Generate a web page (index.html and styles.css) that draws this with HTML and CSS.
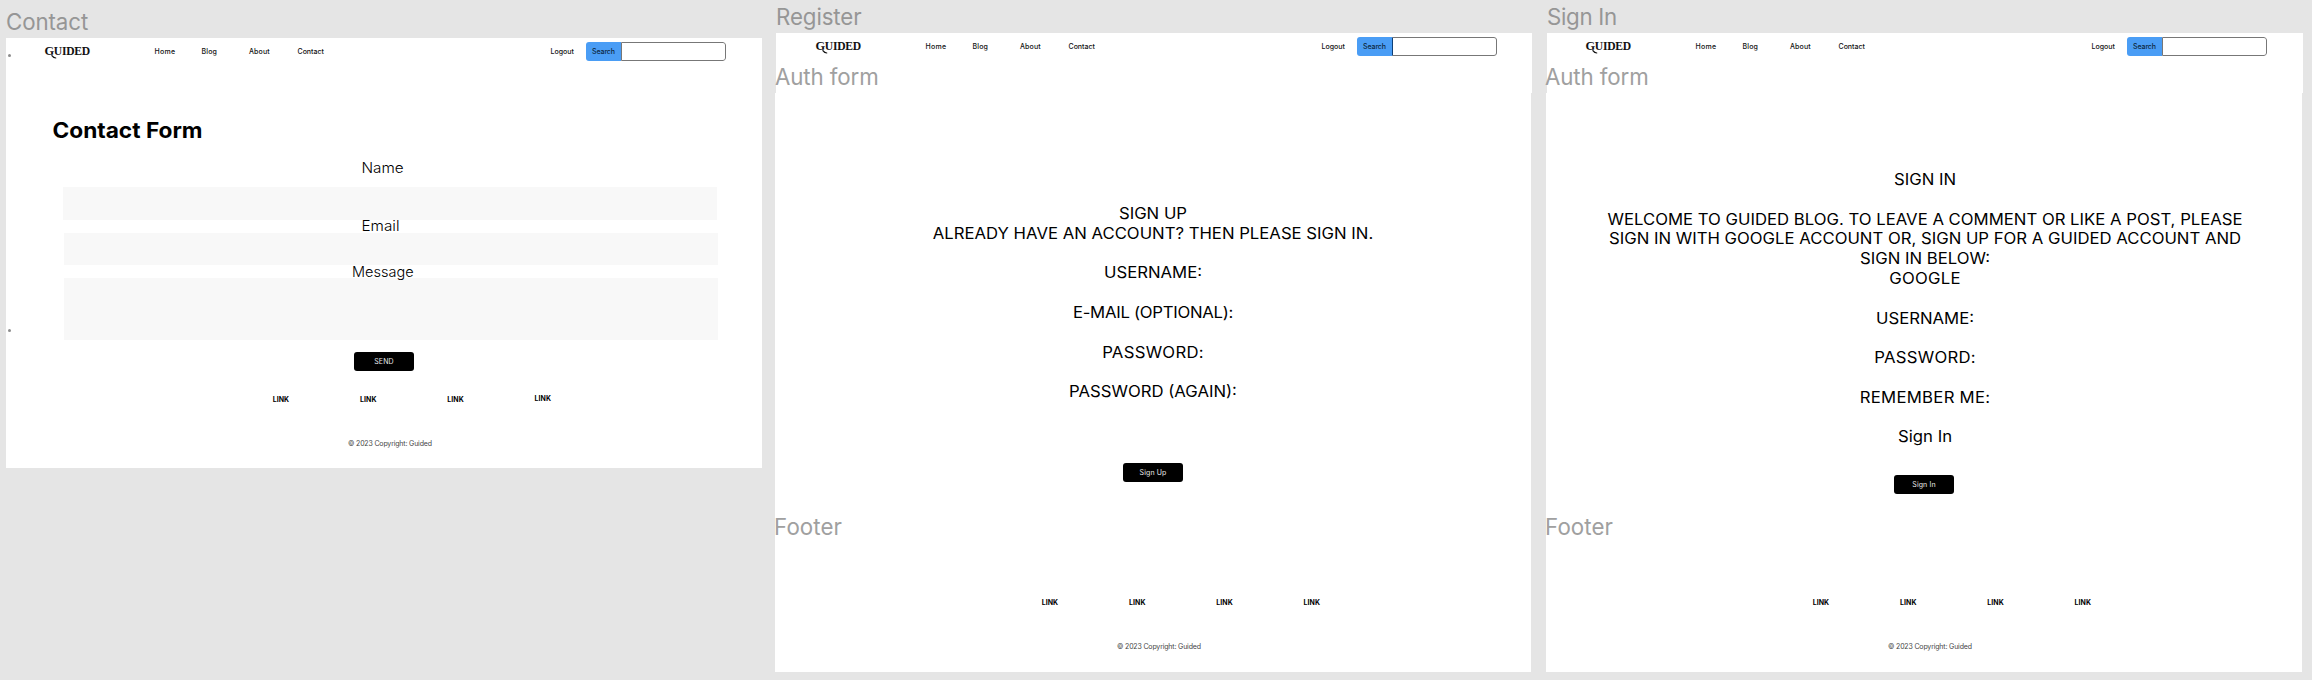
FILE: index.html
```
<!DOCTYPE html>
<html lang="en">
<head>
<meta charset="utf-8">
<title>Guided – Contact, Register, Sign In</title>
<link rel="stylesheet" href="styles.css">
</head>
<body>
<main class="canvas">

  <section class="frame frame-contact">
    <h2 class="label label-frame">Contact</h2>
    <i class="dot dot-top"></i>
    <i class="dot dot-side"></i>
    <header class="topbar">
      <div class="logo"><span class="logo-g">G</span>UIDED<svg class="logo-tail" viewBox="0 0 6 4"><path d="M0.6 0.2C1.6 1.4 2 3.2 5.2 3" fill="none" stroke="#111" stroke-width="1.2"/></svg></div>
      <a class="home">Home</a><a class="blog">Blog</a><a class="about">About</a><a>Contact</a><a>Logout</a>
      <div class="search"><span class="search-btn">Search</span><span class="search-input"></span></div>
    </header>
    <form class="contact-form">
      <h1 class="heading">Contact Form</h1>
      <div class="field-label name">Name</div>
      <div class="field field-name"></div>
      <div class="field-label email">Email</div>
      <div class="field field-email"></div>
      <div class="field-label message">Message</div>
      <div class="field field-message"></div>
      <div class="btn btn-send">SEND</div>
    </form>
    <footer class="footer">
      <nav class="links"><a>LINK</a><a>LINK</a><a>LINK</a><a class="raised">LINK</a></nav>
      <p class="copyright">© 2023 Copyright: Guided</p>
    </footer>
  </section>

  <section class="frame frame-register">
    <h2 class="label label-frame">Register</h2>
    <header class="topbar">
      <div class="logo"><span class="logo-g">G</span>UIDED<svg class="logo-tail" viewBox="0 0 6 4"><path d="M0.6 0.2C1.6 1.4 2 3.2 5.2 3" fill="none" stroke="#111" stroke-width="1.2"/></svg></div>
      <a class="home">Home</a><a class="blog">Blog</a><a class="about">About</a><a>Contact</a><a>Logout</a>
      <div class="search search-dark"><span class="search-btn">Search</span><span class="search-input"></span></div>
    </header>
    <div class="auth">
      <h3 class="label label-auth">Auth form</h3>
      <div class="copy">
        <p>SIGN UP</p>
        <p>ALREADY HAVE AN ACCOUNT? THEN PLEASE SIGN IN.</p>
        <p class="gap">USERNAME:</p>
        <p class="gap tight">E-MAIL (OPTIONAL):</p>
        <p class="gap wide">PASSWORD:</p>
        <p class="gap">PASSWORD (AGAIN):</p>
      </div>
      <div class="btn btn-signup">Sign Up</div>
      <h3 class="label label-footer">Footer</h3>
      <footer class="footer">
        <nav class="links"><a>LINK</a><a>LINK</a><a>LINK</a><a class="raised">LINK</a></nav>
        <p class="copyright">© 2023 Copyright: Guided</p>
      </footer>
    </div>
  </section>

  <section class="frame frame-signin">
    <h2 class="label label-frame">Sign In</h2>
    <header class="topbar">
      <div class="logo"><span class="logo-g">G</span>UIDED<svg class="logo-tail" viewBox="0 0 6 4"><path d="M0.6 0.2C1.6 1.4 2 3.2 5.2 3" fill="none" stroke="#111" stroke-width="1.2"/></svg></div>
      <a class="home">Home</a><a class="blog">Blog</a><a class="about">About</a><a>Contact</a><a>Logout</a>
      <div class="search"><span class="search-btn">Search</span><span class="search-input"></span></div>
    </header>
    <div class="auth">
      <h3 class="label label-auth">Auth form</h3>
      <div class="copy">
        <p>SIGN IN</p>
        <p class="gap">WELCOME TO GUIDED BLOG. TO LEAVE A COMMENT OR LIKE A POST, PLEASE</p>
        <p>SIGN IN WITH GOOGLE ACCOUNT OR, SIGN UP FOR A GUIDED ACCOUNT AND</p>
        <p>SIGN IN BELOW:</p>
        <p class="wide">GOOGLE</p>
        <p class="gap">USERNAME:</p>
        <p class="gap wide">PASSWORD:</p>
        <p class="gap wide">REMEMBER ME:</p>
        <p class="gap">Sign In</p>
      </div>
      <div class="btn btn-signin">Sign In</div>
      <h3 class="label label-footer">Footer</h3>
      <footer class="footer">
        <nav class="links"><a>LINK</a><a>LINK</a><a>LINK</a><a class="raised">LINK</a></nav>
        <p class="copyright">© 2023 Copyright: Guided</p>
      </footer>
    </div>
  </section>

</main>
</body>
</html>
```
FILE: styles.css
```
* { box-sizing: border-box; margin: 0; padding: 0; }
body { font-family: Inter, "Liberation Sans", sans-serif; color: #000; background: #e5e5e5; }
.canvas { position: relative; width: 2312px; height: 680px; background: #e5e5e5; overflow: hidden; }

/* Artboards on the free canvas */
.frame { position: absolute; width: 756px; display: flex; flex-direction: column; }
.frame-contact { left: 6px; top: 38px; height: 430.3px; background: #fff; }
.frame-register { left: 776px; top: 33px; height: 638.7px; }
.frame-signin { left: 1547px; top: 33px; height: 638.7px; }

/* Artboard names */
.label { position: absolute; font-size: 22.3px; line-height: 26px; font-weight: 400; color: #969696; white-space: nowrap; letter-spacing: -0.1px; }
.label-frame { left: 0; top: -29px; }
.frame-signin .label-frame { letter-spacing: -0.3px; }
.label-auth { left: 0; top: -29px; color: #a0a0a0; }
.frame-signin .label-auth { left: -1px; }
.label-footer { left: -1px; top: 421px; color: #a0a0a0; letter-spacing: 0.1px; }

.dot { position: absolute; width: 3px; height: 3px; border-radius: 50%; background: #8c8c8c; }
.dot-top { left: 1.5px; top: 16px; }
.dot-side { left: 1.5px; top: 291px; }

/* Top bar */
.topbar { display: grid; grid-template-columns: 110px 47px 47.5px 48.5px 253px 35.5px 139.5px; align-items: center; height: 27px; padding-left: 38.5px; font-size: 7px; line-height: 9px; font-weight: 450; color: #111; flex: none; }
.frame-register .topbar, .frame-signin .topbar { height: 60px; padding-bottom: 33px; background: #fff; }
.frame-register .topbar { padding-left: 39.5px; }
.home { letter-spacing: 0.3px; }
.blog, .about { letter-spacing: 0.15px; }
.logo { position: relative; font: bold 11.6px/14px "Liberation Serif", serif; letter-spacing: -0.3px; white-space: nowrap; }
.logo-g { font-size: 12.4px; }
.logo-tail { position: absolute; left: 6px; top: 11px; width: 6px; height: 4px; }
.search { display: flex; height: 19px; border-radius: 3px; overflow: hidden; }
.search-btn { width: 35px; padding-left: 6px; line-height: 19px; background: #4a9df5; letter-spacing: -0.1px; color: #0c2740; }
.search-input { flex: 1; border: 1px solid #777; border-radius: 0 3px 3px 0; background: #fff; }
.search-dark .search-input { border-left-color: #0f3f75; }

/* Contact form */
.contact-form { width: 756px; padding-top: 52.5px; }
.heading { padding-left: 46.5px; font-size: 21.4px; line-height: 24px; font-weight: 700; transform: scaleX(1.06); transform-origin: 46.5px 50%; }
.field-label { position: relative; padding-left: 355.5px; font-size: 14.5px; line-height: 16px; font-weight: 350; transform: scaleX(1.055); transform-origin: 355.5px 50%; }
.name { margin-top: 18px; }
.field { width: 654px; height: 32px; margin-left: 58px; background: #f8f8f8; }
.field-name { height: 32.5px; margin: 11.5px 0 0 57px; }
.email { margin-top: -1.5px; }
.field-email { margin-top: -1px; }
.message { margin-top: -1.5px; padding-left: 346px; transform: none; }
.field-message { height: 62px; margin-top: -1.5px; }
.btn { display: flex; align-items: center; justify-content: center; width: 60px; height: 18.6px; border-radius: 3px; background: #000; color: #e8e8e8; font-size: 7px; letter-spacing: 0.1px; }
.btn-send { margin: 12px 0 0 348px; }

/* Auth body */
.auth { position: relative; display: flex; flex-direction: column; width: 756px; height: 578.7px; margin-left: -1px; background: #fff; }
.copy { text-align: center; font-size: 15.7px; line-height: 19.8px; font-weight: 430; letter-spacing: 0; white-space: nowrap; transform: scaleX(1.065); }
.frame-register .copy { padding-top: 111.1px; }
.frame-signin .copy { padding: 77.1px 0 0 2px; }
.gap { margin-top: 19.8px; }
.tight { letter-spacing: -0.25px; }
.wide { letter-spacing: 0.25px; }
.btn-signup { margin: 61.3px 0 0 348px; }
.btn-signin { margin: 28.2px 0 0 348px; }

/* Footer */
.footer { margin-top: auto; padding-bottom: 20.5px; font-size: 7px; line-height: 9px; }
.links { display: grid; grid-template-columns: repeat(4, 87.3px); padding-left: 266.7px; font-weight: 700; letter-spacing: 0.05px; }
.raised { margin-top: -0.5px; }
.copyright { margin-top: 35.2px; padding-left: 342px; color: #444; letter-spacing: -0.17px; }
```
